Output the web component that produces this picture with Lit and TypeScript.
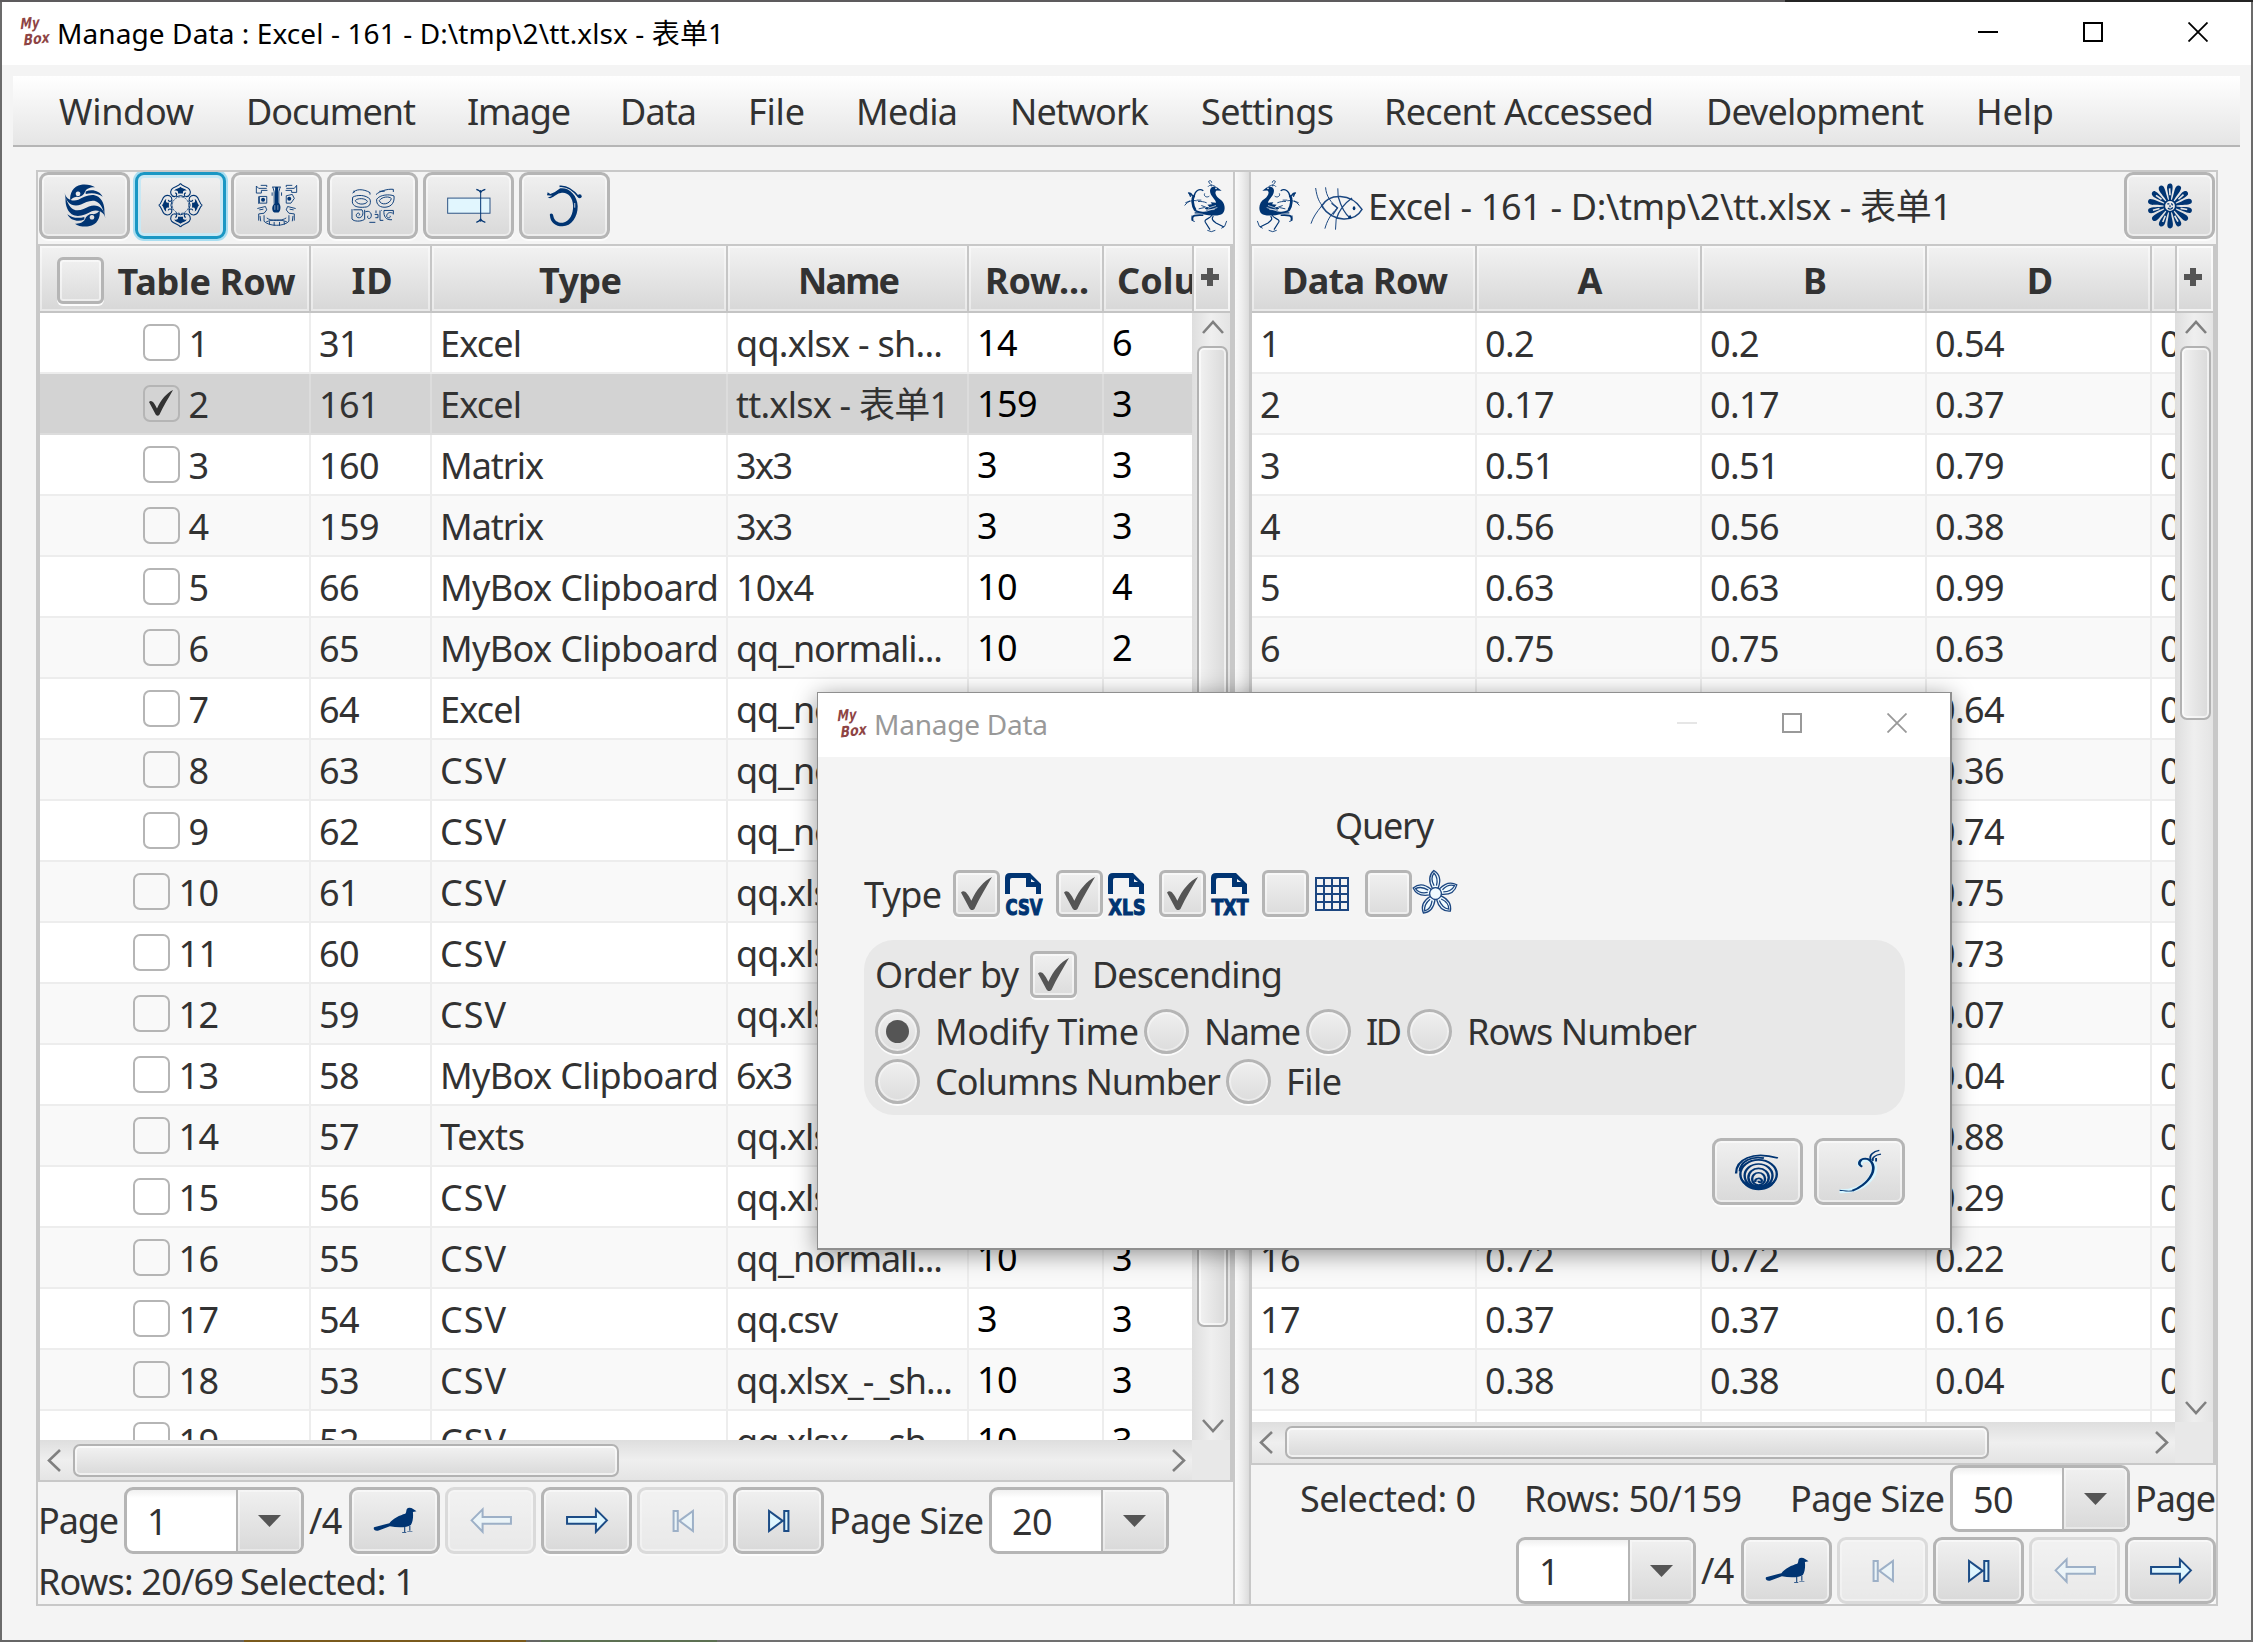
import { LitElement, html, svg, css, nothing } from "lit";
import { customElement, property } from "lit/decorators.js";
import { classMap } from "lit/directives/class-map.js";
import { styleMap } from "lit/directives/style-map.js";

const NAVY = "#003472";
const FONT = css`"Noto Sans", "Open Sans", "Noto Sans CJK SC", sans-serif`;

/* ---------- icons ---------- */

const turns = (n: number, f: (deg: number) => unknown) =>
  Array.from({ length: n }, (_, i) => f((360 / n) * i));

interface Glyph {
  box: string;
  w: number;
  h: number;
  body: unknown;
}

const swirlHalf = svg`
  <path fill=${NAVY} fill-rule="evenodd" d="M120 124 C117 102 128 80 153 76 C168 74 186 77 194 84 C180 83 168 88 164 97 C160 108 150 114 139 112 C130 113 124 117 120 124Z M143 96 a7 7 0 1 0 .1 0Z"/>
  <path fill=${NAVY} d="M166 96 C186 88 208 94 217 112 C204 102 186 98 166 104Z"/>
  <path fill=${NAVY} d="M103 100 C106 118 124 128 144 121 C162 112 184 100 204 112 C220 124 224 144 222 166 C218 144 208 128 192 124 C176 122 164 130 152 135 C128 144 106 132 103 100Z"/>`;

const petalQuarter = svg`
  <path fill=${NAVY} d="M452 80 C457 86 468 85 471 93 C464 90 457 93 460 101 H444 C447 93 440 90 433 93 C436 85 447 86 452 80Z"/>
  <path fill="none" stroke=${NAVY} stroke-width="3.4" d="M452 70 C455 79 472 79 479 88 C485 98 480 110 469 110 C462 109 462 100 468 99 M452 70 C449 79 432 79 425 88 C419 98 424 110 435 110 C442 109 442 100 436 99"/>
  <path fill="none" stroke=${NAVY} stroke-width="3" d="M438 111 Q452 103 466 111"/>`;

const GLYPHS: Record<string, Glyph> = {
  swirl: {
    box: "101 74 126 128", w: 42, h: 43,
    body: svg`<g>${swirlHalf}</g><g transform="rotate(180 164 138)">${swirlHalf}</g>`,
  },
  petals: {
    box: "384 69 136 136", w: 45, h: 45,
    body: svg`${turns(4, (d) => svg`<g transform="rotate(${d} 452 136)">${petalQuarter}</g>`)}
      <circle cx="452" cy="136" r="25" fill="none" stroke=${NAVY} stroke-width="2.4" stroke-dasharray="7 3"/>`,
  },
  mask: {
    box: "673 75 128 128", w: 43, h: 43,
    body: svg`<g fill="none" stroke=${NAVY} stroke-width="2.6">
      <path d="M677 81 L684 88 H708 M677 81 V102 H692 V94 H710 M690 79 H708 V84 M797 79 L790 88 H766 M797 79 V100 H782 V94 H764 M784 79 H766 V84"/>
      <path d="M724 84 H750 M726 84 L730 98 V134 M748 84 L744 98 V134 M724 100 V110 M752 100 V110"/>
      <path d="M686 112 H708 V132 H686 Z M766 110 L784 106 L790 118 L780 132 H766 Z M684 112 V134"/>
      <path d="M680 148 L704 142 L708 152 L700 162 L684 164 V184 M686 152 L698 150 M688 170 L690 186 M794 148 L770 142 L766 152 L774 162 L790 164 V184 M788 152 L776 150 M786 170 L784 186"/>
      <path d="M700 168 V186 C715 202 760 202 774 186 V168 M708 176 C720 186 752 186 766 176 M706 188 C722 180 752 180 768 188 M716 196 V186 M730 199 V188 M746 199 V188 M760 196 V186"/></g>
      <g fill=${NAVY}><path d="M733 84 H742 V130 C752 136 750 156 743 160 H731 C722 156 722 138 732 132Z"/><circle cx="697" cy="122" r="6"/><circle cx="775" cy="119" r="6"/></g>
      <path d="M732 138 V152 M741 138 V152" stroke="#eee" stroke-width="1.6"/>`,
  },
  face: {
    box: "91 84 132 106", w: 44, h: 35,
    body: svg`<g fill="none" stroke=${NAVY} stroke-width="2.8">
      <path d="M96 100 C104 86 128 86 148 98 V104 M100 92 V98 M166 104 C176 94 200 86 218 88 V96 M176 94 H192"/>
      <path d="M96 112 C108 104 136 104 148 118 C152 132 146 142 132 142 C112 144 96 140 95 126Z M104 122 C110 114 134 114 140 124 C140 134 110 138 104 122Z"/>
      <path d="M168 118 C178 104 206 102 220 108 C222 126 214 140 196 142 C180 144 166 136 168 118Z M176 122 C184 110 206 108 212 116 C208 134 180 138 176 122Z"/>
      <path d="M94 148 V178 C100 186 120 186 130 180 M98 150 H124 C130 160 126 176 112 174 C104 170 106 160 114 160 C118 162 118 166 114 168"/>
      <path d="M132 150 V180 M134 156 C148 150 156 164 150 174 C144 180 138 174 142 168 M146 188 H164"/>
      <path d="M166 152 V160 M162 164 H172 V174 H164 M178 152 V182 H188 M182 152 H184"/>
      <path d="M190 152 H218 V164 M190 152 C188 170 196 182 214 180 M216 160 C206 156 198 160 198 170 C202 178 212 174 208 168"/></g>`,
  },
  rename: {
    box: "380 84 132 104", w: 44, h: 35,
    body: svg`<rect x="382" y="114" width="127" height="45" fill="#e1f6fe" stroke="#2f5585" stroke-width="3"/>
      <g stroke=${NAVY} stroke-width="3" fill="none"><path d="M481 90 V184"/><path stroke-width="4" d="M468 88 Q480 92 481 98 Q482 92 495 88 M468 186 Q480 182 481 176 Q482 182 495 186"/></g>`,
  },
  dragon: {
    box: "684 74 106 126", w: 35, h: 42,
    body: svg`<path fill=${NAVY} d="M693 166 C690 158 702 156 703 166 C706 182 718 188 732 187 C752 184 764 160 763 136 C762 110 746 94 726 98 C716 98 708 108 694 114 L686 112 L700 106 L684 105 L686 96 L694 101 L708 95 L724 84 C750 80 776 104 777 138 C777 170 758 198 731 198 C710 198 694 186 693 166Z"/>
      <path d="M722 78 C744 76 764 90 780 110" fill="none" stroke=${NAVY} stroke-width="5"/>
      <circle cx="783" cy="108" r="6" fill=${NAVY}/><path d="M768 128 V142" stroke="#eee" stroke-width="2.5"/>`,
  },
  phoenix: {
    box: "8 44 132 158", w: 44, h: 53,
    body: svg`<path fill=${NAVY} d="M86 76 C86 64 100 60 108 66 L121 76 L106 75 C98 80 104 92 114 100 C132 110 134 134 124 144 C112 154 86 150 62 145 L76 134 L70 128 L84 124 L78 118 L92 116 L88 110 L104 112 C104 102 86 92 86 76Z"/>
      <circle cx="104" cy="69" r="2.4" fill="#f4f4f4"/>
      <g fill="none" stroke=${NAVY}>
      <path stroke-width="2.6" d="M90 63 C92 54 80 54 82 48 C86 44 92 47 91 52 M80 64 C84 58 96 58 102 64"/>
      <path stroke-width="8" d="M42 134 C32 118 32 100 38 90"/><path stroke-width="4" d="M38 94 C40 76 54 68 66 76 M34 92 C30 84 26 82 20 83 M24 84 L28 94"/>
      <path stroke-width="2.6" d="M84 92 C76 98 66 92 70 84 M10 120 C20 106 34 104 46 106 M46 104 H60 M12 112 L26 106 M50 108 C60 108 66 108 76 112 M60 120 L92 132 M52 130 L70 126"/>
      <path stroke-width="5" d="M40 134 C56 144 70 140 90 142 M34 164 C30 148 42 148 66 149"/><path stroke-width="3" d="M40 142 H64 M32 150 V164 L40 168"/>
      <path stroke-width="3.6" d="M92 148 C88 160 66 160 72 170 L86 192 M96 152 C90 160 92 164 104 172 L128 184"/><path stroke-width="2.6" d="M78 194 L90 198 L102 194 M120 188 L130 182 L136 166"/></g>
      <g stroke="#f4f4f4" stroke-width="2"><path d="M72 138 L108 126 M80 128 L104 120 M70 133 L100 132"/></g>`,
  },
  fish: {
    box: "389 60 160 132", w: 53, h: 44,
    body: svg`<g fill="none" stroke="#1b4781" stroke-width="3">
      <path stroke-width="4.5" d="M424 120 C446 82 512 78 546 130 C524 168 460 172 424 120Z"/>
      <path d="M406 66 C410 94 416 108 430 124 M424 120 C408 140 398 154 392 173 M436 64 C438 92 452 108 472 126 C450 146 440 166 434 188"/>
      <path stroke-width="4" d="M454 112 L472 126 L458 146 M474 92 C484 126 494 144 510 156 M516 96 C490 114 474 140 468 160"/>
      <path d="M473 67 L474 92 M468 160 L466 191"/></g><ellipse cx="522" cy="127" rx="4" ry="6" fill=${NAVY}/><path d="M502 158 L510 146 L516 156Z" fill=${NAVY}/>`,
  },
  sun: {
    box: "-34 -34 68 68", w: 46, h: 46,
    body: svg`${turns(14, (d) => svg`<g transform="rotate(${d})"><path fill=${NAVY} d="M-1.4 -9 C-2 -18 -5.6 -26 -4 -30 C-3 -34 2 -34 3.4 -31 C5 -26 2 -18 1.4 -9Z"/><path d="M0 -16 L-.6 -26" stroke="#e6e6e6" stroke-width=${Math.round(d / 25.7) % 2 ? 0 : 2.4}/></g>`)}
      <circle r="8.5" fill="#e9e9e9" stroke=${NAVY} stroke-width="2.5"/><path d="M-4 -3 H-1 M2 -4 L4 -1 M-3 3 C0 6 3 4 4 2 M0 -1 V2" stroke=${NAVY} stroke-width="1.8" fill="none"/>`,
  },
  bird: {
    box: "711 379 86 83", w: 44, h: 27,
    body: svg`<path fill=${NAVY} d="M713 441 L743 429 C750 415 764 404 774 400 C778 392 774 383 782 381 C788 381 791 387 796 392 L789 394 C790 408 789 425 785 434 C778 442 760 443 744 438 L722 451 C714 454 711 446 713 441Z"/>
      <path d="M773 440 V456 M783 437 V452 M768 458 H776 M778 455 H788" stroke=${NAVY} stroke-width="2" fill="none"/>`,
  },
  prev: {
    box: "898 384 80 75", w: 42, h: 25,
    body: svg`<path class="line" d="M901 421 L922 388 V411 H976 V431 H922 V455Z"/>`,
  },
  next: {
    box: "1082 384 80 75", w: 42, h: 25,
    body: svg`<path class="line" d="M1160 421 L1139 388 V411 H1084 V431 H1139 V455Z"/>`,
  },
  first: {
    box: "1284 388 42 67", w: 22, h: 22,
    body: svg`<path class="line" d="M1287 391 H1295 V452 H1287Z M1324 391 V452 L1298 421Z"/>`,
  },
  last: {
    box: "1468 388 42 67", w: 22, h: 22,
    body: svg`<path class="line" d="M1507 391 H1499 V452 H1507Z M1470 391 V452 L1496 421Z"/>`,
  },
  grid: {
    box: "0 0 34 34", w: 34, h: 34,
    body: svg`<path d="M1 1 H33 V33 H1Z M9 1 V33 M17 1 V33 M25 1 V33 M1 9 H33 M1 17 H33 M1 25 H33" fill="none" stroke="#1c4680" stroke-width="2"/>`,
  },
  blossom: {
    box: "-23 -23 46 46", w: 45, h: 45,
    body: svg`<g fill="#f0fbff" stroke="#1c4680" stroke-width="1.3">${turns(5, (d) => svg`<g transform="rotate(${d - 3})"><path d="M-3 -5.5 C-6.5 -13 -6 -19 -.5 -23.5 C6 -19 6 -12 3 -5.5Z"/><path d="M-1 -8 C-4 -14 -3 -18 -.5 -21 C3 -17 3 -13 1.4 -8"/></g>`)}<circle r="6"/></g>`,
  },
  shell: {
    box: "618 1282 84 104", w: 45, h: 38,
    body: svg`<g fill="none" stroke=${NAVY} stroke-width="4.5">
      <path d="M620 1338 C620 1300 650 1276 698 1296"/><path d="M627 1332 C628 1304 648 1290 672 1296"/>
      <ellipse cx="662" cy="1340" rx="34" ry="39"/><ellipse cx="662" cy="1344" rx="26" ry="32"/><ellipse cx="662" cy="1349" rx="19" ry="25"/><ellipse cx="662" cy="1353" rx="12" ry="17"/><path d="M656 1362 C654 1350 668 1348 668 1358 C668 1364 662 1364 662 1358"/></g>
      <path fill=${NAVY} d="M630 1352 C638 1366 650 1370 662 1370 C674 1370 688 1366 694 1352 C692 1374 678 1384 662 1384 C646 1384 634 1374 630 1352Z"/>`,
  },
  sprout: {
    box: "801 1268 82 124", w: 44, h: 46,
    body: svg`<g fill="none" stroke="#d8f6ff" stroke-width="11"><path d="M842 1314 C838 1294 862 1290 868 1312 C872 1340 850 1384 804 1382"/></g>
      <g fill="none" stroke=${NAVY} stroke-width="5"><path d="M846 1316 C836 1308 842 1294 852 1294 C866 1296 870 1318 864 1336 C856 1360 838 1376 828 1380"/><path stroke-width="2.5" d="M830 1380 C820 1384 812 1380 804 1379"/><path stroke-width="3.5" d="M862 1298 C858 1284 868 1274 878 1272 M866 1300 C864 1290 872 1284 881 1282 M872 1302 V1292"/></g>`,
  },
};

@customElement("ui-icon")
export class UiIcon extends LitElement {
  @property() name = "";
  @property({ type: Boolean }) flip = false;

  static styles = css`
    :host { display: inline-flex; flex: none; }
    svg { display: block; overflow: visible; }
    .flip { transform: scaleX(-1); }
    .line { fill: #dff6fe; stroke: #1c4c86; stroke-width: 2px; vector-effect: non-scaling-stroke; }
  `;

  render() {
    const g = GLYPHS[this.name];
    if (!g) return nothing;
    return html`<svg class=${classMap({ flip: this.flip })} width=${g.w} height=${g.h} viewBox=${g.box} preserveAspectRatio="none">${g.body}</svg>`;
  }
}

@customElement("file-icon")
export class FileIcon extends LitElement {
  @property() ext = "";

  static styles = css`
    :host { display: inline-flex; flex: none; }
    text { font: 900 22px "DejaVu Sans Condensed", "DejaVu Sans", sans-serif; }
  `;

  render() {
    return html`<svg width="40" height="44" viewBox="0 0 40 44">
      <path fill=${NAVY} fill-rule="evenodd" d="M1 22 V6 Q1 1 6 1 H26 L37 12 V22 H32 V15 H22 V6 H8 Q6 6 6 8 V22Z M27 7 V10 H31Z"/>
      <text x="1.5" y="42.5" textLength="37" lengthAdjust="spacingAndGlyphs" fill=${NAVY} stroke=${NAVY} stroke-width="1.1">${this.ext}</text>
    </svg>`;
  }
}

@customElement("box-logo")
export class BoxLogo extends LitElement {
  static styles = css`
    :host { display: inline-flex; flex: none; }
    text { font: italic 700 15px "DejaVu Sans Condensed", "DejaVu Sans", sans-serif; fill: #8e4444; }
  `;
  render() {
    return html`<svg width="32" height="32" viewBox="0 0 32 32">
      <text x="2" y="13" textLength="19" lengthAdjust="spacingAndGlyphs" transform="rotate(-6 4 14) skewX(-6)">My</text>
      <text x="7" y="29.5" textLength="26" lengthAdjust="spacingAndGlyphs" transform="rotate(-7 4 30) skewX(-6)">Box</text>
    </svg>`;
  }
}

/* ---------- text set to a given measure ---------- */

@customElement("ui-text")
export class UiText extends LitElement {
  @property({ type: Number }) w = 0;
  @property() label = "";

  static styles = css`
    :host { display: inline-block; flex: none; white-space: pre; }
    .ink { display: inline-block; }
  `;

  updated() {
    const ink = this.renderRoot.querySelector<HTMLElement>(".ink")!;
    ink.style.letterSpacing = "0px";
    ink.style.marginRight = "0px";
    if (!this.w) return;
    const natural = ink.getBoundingClientRect().width;
    const gap = (this.w - natural) / (this.label.length - 1);
    ink.style.letterSpacing = `${gap}px`;
    ink.style.marginRight = `${-gap}px`;
  }

  render() {
    return html`<span class="ink">${this.label}</span>`;
  }
}

const text = (label: string, w: number) => html`<ui-text .label=${label} .w=${w}></ui-text>`;

/* ---------- data ---------- */

const MENUS: [string, number, number][] = [
  ["Window", 187, 135], ["Document", 221, 170], ["Image", 153, 104], ["Data", 128, 77],
  ["File", 108, 57], ["Media", 154, 102], ["Network", 191, 139], ["Settings", 183, 133],
  ["Recent Accessed", 322, 270], ["Development", 270, 218], ["Help", 120, 78],
];

const LEFT_ROWS: string[][] = [
  ["1", "31", "Excel", "qq.xlsx - sh...", "14", "6"],
  ["2", "161", "Excel", "tt.xlsx - 表单1", "159", "3"],
  ["3", "160", "Matrix", "3x3", "3", "3"],
  ["4", "159", "Matrix", "3x3", "3", "3"],
  ["5", "66", "MyBox Clipboard", "10x4", "10", "4"],
  ["6", "65", "MyBox Clipboard", "qq_normali...", "10", "2"],
  ["7", "64", "Excel", "qq_normali...", "10", "2"],
  ["8", "63", "CSV", "qq_normali...", "10", "3"],
  ["9", "62", "CSV", "qq_normali...", "10", "3"],
  ["10", "61", "CSV", "qq.xlsx_-_sh...", "10", "3"],
  ["11", "60", "CSV", "qq.xlsx_-_sh...", "10", "3"],
  ["12", "59", "CSV", "qq.xlsx_-_sh...", "10", "3"],
  ["13", "58", "MyBox Clipboard", "6x3", "6", "3"],
  ["14", "57", "Texts", "qq.xlsx_-_sh...", "10", "3"],
  ["15", "56", "CSV", "qq.xlsx_-_sh...", "10", "3"],
  ["16", "55", "CSV", "qq_normali...", "10", "3"],
  ["17", "54", "CSV", "qq.csv", "3", "3"],
  ["18", "53", "CSV", "qq.xlsx_-_sh...", "10", "3"],
  ["19", "52", "CSV", "qq.xlsx_-_sh...", "10", "3"],
];

const NAME_W: Record<string, number> = {
  "qq.xlsx - sh...": 207, "tt.xlsx - 表单1": 214, "qq_normali...": 207, "qq.xlsx_-_sh...": 217,
  "qq.csv": 102, "3x3": 57, "10x4": 78, "6x3": 57,
};
const TYPE_W: Record<string, number> = {
  Excel: 82, Matrix: 104, "MyBox Clipboard": 279, CSV: 66, Texts: 85,
};

const RIGHT_ROWS: [string, string][] = [
  ["0.2", "0.54"], ["0.17", "0.37"], ["0.51", "0.79"], ["0.56", "0.38"], ["0.63", "0.99"],
  ["0.75", "0.63"], ["0.6", "0.64"], ["0.41", "0.36"], ["0.22", "0.74"], ["0.9", "0.75"],
  ["0.35", "0.73"], ["0.8", "0.07"], ["0.14", "0.04"], ["0.57", "0.88"], ["0.48", "0.29"],
  ["0.72", "0.22"], ["0.37", "0.16"], ["0.38", "0.04"], ["", ""],
];

/* ---------- page ---------- */

@customElement("app-root")
export class AppRoot extends LitElement {
  static styles = css`
    :host { display: block; width: 2253px; height: 1642px; overflow: hidden; }
    * { box-sizing: border-box; }
    .desktop {
      position: relative; width: 2253px; height: 1642px; padding: 2px; color: #323232;
      font: 36px/50px ${FONT};
      background: linear-gradient(90deg, #5d5b5d 0 1785px, #242424 1785px) 0 0 / 100% 2px no-repeat,
        linear-gradient(90deg, #666 0 244px, #7a5a1c 244px 526px, #666 526px 541px, #5c7052 541px 717px, #707070 717px) 0 100% / 100% 2px no-repeat, #6b6b6b;
    }
    .window { height: 1638px; background: #f4f4f4; display: flex; flex-direction: column; overflow: hidden; }
    .titlebar { height: 63px; background: #fff; color: #000; font-size: 28px; display: flex; align-items: center; padding: 0 43px 3px 18px; flex: none; }
    .titlebar .caption { margin-left: 5px; flex: 1; display: flex; line-height: 40px; padding-top: 1px; }
    .controls { display: flex; gap: 85px; align-items: center; margin-bottom: 1px; }
    .controls svg { display: block; }
    .menubar {
      margin: 11px 11px 0; height: 71px; flex: none; display: flex; align-items: center; padding: 3px 0 0 46px;
      background: linear-gradient(#fff, #e5e5e5); border-bottom: 2px solid #b5b5b5;
    }
    .menu { flex: none; }
    .split { margin: 23px 33px 0 34px; height: 1436px; border: 2px solid #c8c8c8; display: grid; grid-template-columns: 1195px 18px 1fr; }
    .pane { display: flex; flex-direction: column; overflow: hidden; min-width: 0; }
    .divider { border: solid #c8c8c8; border-width: 0 2px; background: linear-gradient(90deg, #fafafa, #eee 50%, #dcdcdc); }
    .toolbar { height: 72px; flex: none; display: flex; gap: 5px; align-items: flex-start; padding-left: 1px; }
    .toolbar .push { margin-left: auto; }
    .toolbar.right { padding: 0 1px 0 5px; gap: 0; }
    .toolbar .bird { margin-top: 8px; }
    .toolbar .fish { margin: 14px 5px 0 10px; }
    .toolbar .heading { margin-top: 10px; }
    .btn {
      width: 91px; height: 67px; flex: none; display: flex; align-items: center; justify-content: center;
      border: 3px solid #b5b5b5; border-radius: 9px;
      background: linear-gradient(#f0f0f0, #d9d9d9);
      box-shadow: inset 0 0 0 2px rgba(255, 255, 255, .5), 0 2px 0 #fcfcfc;
    }
    .btn.focus { border-color: #1a97c4; box-shadow: inset 0 0 0 3px #c8e8f4, 0 0 0 2px #a9def1; }
    .btn.off { opacity: .4; }

    .grid { display: grid; flex: none; background: #fff; border: solid #c8c8c8; border-width: 2px 0 2px 0; }
    .grid.left { height: 1238px; border-left-width: 2px; border-right-width: 3px; grid-template: 67px 1127px 40px / 1fr 38px; }
    .grid.right { height: 1221px; border-left-width: 1px; border-right-width: 3px; grid-template: 67px 1109px 41px / 1fr 38px; }
    .head { display: flex; overflow: hidden; background: linear-gradient(#f2f2f2, #d7d7d7); border-bottom: 2px solid #c4c4c4; font-weight: 700; }
    .head .cell { border-right: 2px solid #c6c6c6; box-shadow: inset 0 0 0 2px rgba(255, 255, 255, .45); display: flex; align-items: center; justify-content: center; flex: none; overflow: hidden; padding: 4px 0 0 3px; }
    .head .cell.start { justify-content: flex-start; padding-left: 13px; }
    .plus { border-left: 2px solid #c6c6c6; border-bottom: 2px solid #c4c4c4; background: linear-gradient(#f2f2f2, #d7d7d7); box-shadow: inset 0 0 0 2px rgba(255, 255, 255, .7); display: flex; align-items: center; justify-content: center; padding: 0 5px 4px 0; }
    .body { overflow: hidden; min-height: 0; }
    .row { display: flex; height: 61px; background: #fff; border-bottom: 2px solid #ededed; }
    .row.alt { background: #f9f9f9; }
    .row.sel { background: #d3d3d3; border-color: #dcdcdc; }
    .row .cell { flex: none; border-right: 2px solid #ededed; display: flex; align-items: center; padding: 2px 0 0 8px; overflow: hidden; letter-spacing: -.6px; white-space: pre; }
    .row.sel .cell { border-color: #dcdcdc; }
    .row .cell.idx { justify-content: center; padding-left: 2px; gap: 9px; }
    .row .cell.num { color: #000; padding-top: 0; }
    .c0 { width: 271px; } .c1 { width: 121px; } .c2 { width: 296px; } .c3 { width: 241px; } .c4 { width: 135px; } .c5 { width: 190px; }
    .r0 { width: 225px; }
    .tick { width: 37px; height: 37px; border: 2px solid #b5b5b5; border-radius: 7px; margin-bottom: 3px; display: flex; align-items: center; justify-content: center; flex: none; }
    .vbar { background: linear-gradient(90deg, #dedede, #efefef 50%, #e4e4e4); display: flex; flex-direction: column; align-items: center; padding: 7px 0 7px 3px; }
    .hbar { background: linear-gradient(#dedede, #efefef 50%, #e4e4e4); display: flex; align-items: center; padding: 0 6px 0 7px; }
    .vthumb, .hthumb { border: 2px solid #b2b2b2; border-radius: 7px; flex: none; box-shadow: inset 0 0 0 2px rgba(255, 255, 255, .6); }
    .vthumb { width: 31px; margin-top: 11px; background: linear-gradient(90deg, #f2f2f2, #d9d9d9); }
    .hthumb { height: 33px; margin-left: 11px; background: linear-gradient(#f2f2f2, #d9d9d9); }
    .down { margin-top: auto; } .end { margin-left: auto; }
    .corner { background: #e8e8e8; }

    .pager { display: flex; gap: 5px; align-items: center; height: 67px; flex: none; margin-top: 5px; }
    .pager.far { justify-content: flex-end; padding-right: 0; }
    .pager.tight { margin-top: 0; }
    .slash { width: 35px; letter-spacing: -.6px; }
    .wide { margin-right: 43px; }
    .status { margin-top: 3px; display: flex; gap: 6px; }
    .combo { width: 180px; height: 67px; flex: none; display: flex; border: 3px solid #b5b5b5; border-radius: 9px; background: linear-gradient(#f0f0f0, #fff 8px); overflow: hidden; }
    .combo .value { width: 109px; padding: 7px 0 0 20px; letter-spacing: -.6px; }
    .combo .drop { flex: 1; border-left: 2px solid #b5b5b5; background: linear-gradient(#f0f0f0, #d9d9d9); display: flex; align-items: center; justify-content: center; box-shadow: inset 0 0 0 2px rgba(255, 255, 255, .4); }

    .dialog { position: absolute; left: 817px; top: 692px; width: 1135px; height: 558px; background: #f4f4f4; border: 2px solid #8f8f8f; border-width: 1px 2px 2px 1px; box-shadow: 0 4px 22px rgba(0, 0, 0, .42); display: flex; flex-direction: column; overflow: visible; }
    .dialog .titlebar { color: #999; height: 64px; padding: 0 43px 3px 19px; }
    .dialog .content { padding: 44px 45px 0 46px; display: flex; flex-direction: column; }
    .query { display: flex; justify-content: center; }
    .types { display: flex; align-items: center; height: 47px; margin-top: 19px; }
    .types .lead { width: 89px; padding-top: 2px; }
    .opt { display: flex; align-items: center; width: 103px; flex: none; }
    .opt.n4 { gap: 4px; } .opt.n5 { gap: 6px; } .opt.n0 { gap: 1px; }
    .check { width: 47px; height: 47px; flex: none; border: 3px solid #b5b5b5; border-radius: 6px; background: linear-gradient(#f0f0f0, #dcdcdc); box-shadow: inset 0 0 0 2px rgba(255, 255, 255, .5), 0 2px 0 #fcfcfc; display: flex; align-items: center; justify-content: center; }
    .order { margin-top: 23px; height: 175px; border-radius: 30px; background: #e8e8e8; padding: 11px 0 0 11px; display: flex; flex-direction: column; }
    .line { display: flex; align-items: center; height: 47px; }
    .line .check { margin: 0 15px 0 11px; }
    .line + .line { margin-top: 11px; height: 45px; }
    .line + .line + .line { margin-top: 5px; }
    .radio { width: 45px; height: 45px; flex: none; border: 3px solid #b5b5b5; border-radius: 50%; background: linear-gradient(#f0f0f0, #dcdcdc); box-shadow: inset 0 0 0 2px rgba(255, 255, 255, .4), 0 2px 0 #fcfcfc; display: flex; align-items: center; justify-content: center; margin-right: 15px; }
    .radio.on::after { content: ""; width: 23px; height: 23px; border-radius: 50%; background: #555; }
    .pick { display: flex; align-items: center; flex: none; margin-right: 5px; }
    .actions { display: flex; justify-content: flex-end; gap: 11px; margin-top: 23px; }
    .check24 { margin: 2px 0 0 14px; }
  `;

  private arrow(dir: "up" | "down" | "left" | "right") {
    const d = { up: "M2 13 L12 2 L22 13", down: "M2 2 L12 13 L22 2", left: "M13 2 L2 12.5 L13 23", right: "M2 2 L13 12.5 L2 23" }[dir];
    const vertical = dir === "up" || dir === "down";
    return html`<svg class=${classMap({ down: dir === "down", end: dir === "right" })} width=${vertical ? 24 : 15} height=${vertical ? 15 : 25}><path d=${d} fill="none" stroke="#808080" stroke-width="2.6"/></svg>`;
  }

  private controls(color: string, minColor: string) {
    return html`<div class="controls">
      <svg width="20" height="20"><path d="M0 10 H20" stroke=${minColor} stroke-width="2"/></svg>
      <svg width="20" height="20"><path d="M1 1 H19 V19 H1Z" fill="none" stroke=${color} stroke-width="2"/></svg>
      <svg width="20" height="20"><path d="M.5 .5 L19.5 19.5 M19.5 .5 L.5 19.5" stroke=${color} stroke-width="1.8"/></svg>
    </div>`;
  }

  private mark(size: number, color: string) {
    return html`<svg width=${size} height=${(size * 32) / 30} viewBox="0 0 30 32"><path fill=${color} d="M0 15 C3 12 6 15 10 23 C15 12 22 4 30 0 C25 9 18 20 13 31 C11 33 9 32 8 30Z"/></svg>`;
  }

  private button(icon: string, state = "") {
    return html`<div class="btn ${state}"><ui-icon name=${icon}></ui-icon></div>`;
  }

  private combo(value: string) {
    return html`<div class="combo"><div class="value">${value}</div><div class="drop"><svg width="23" height="12"><path d="M0 0 H23 L11.5 12Z" fill="#555"/></svg></div></div>`;
  }

  private plus() {
    return html`<div class="plus"><svg width="18" height="18"><path d="M9 0 V18 M0 9 H18" stroke="#555" stroke-width="6"/></svg></div>`;
  }

  private leftRow(r: string[], i: number) {
    const sel = i === 1;
    return html`<div class=${classMap({ row: true, alt: i % 2 === 1, sel })}>
      <div class="cell idx c0"><span class="tick">${sel ? this.mark(24, "#323232") : nothing}</span>${r[0]}</div>
      <div class="cell c1">${r[1]}</div>
      <div class="cell c2">${text(r[2], TYPE_W[r[2]])}</div>
      <div class="cell c3">${text(r[3], NAME_W[r[3]])}</div>
      <div class="cell num c4">${r[4]}</div>
      <div class="cell num c5">${r[5]}</div>
    </div>`;
  }

  private rightRow(r: [string, string], i: number) {
    return html`<div class=${classMap({ row: true, alt: i % 2 === 1 })}>
      <div class="cell r0">${r[0] ? i + 1 : ""}</div>
      <div class="cell r0">${r[0]}</div>
      <div class="cell r0">${r[0]}</div>
      <div class="cell r0">${r[1]}</div>
      <div class="cell r0">${r[0] ? "0" : ""}</div>
    </div>`;
  }

  private radio(label: string, w: number, on = false) {
    return html`<div class="pick"><span class=${classMap({ radio: true, on })}></span>${text(label, w)}</div>`;
  }

  private leftPane() {
    return html`<section class="pane">
      <div class="toolbar">
        ${this.button("swirl")}${this.button("petals", "focus")}${this.button("mask")}${this.button("face")}${this.button("rename")}${this.button("dragon")}
        <ui-icon class="push bird" name="phoenix"></ui-icon><span></span>
      </div>
      <div class="grid left">
        <div class="head">
          <div class="cell c0"><span class="check"></span><span class="check24">${text("Table Row", 178)}</span></div>
          <div class="cell c1">${text("ID", 41)}</div>
          <div class="cell c2">${text("Type", 83)}</div>
          <div class="cell c3">${text("Name", 102)}</div>
          <div class="cell c4">${text("Row...", 104)}</div>
          <div class="cell start c5">${text("Columns", 157)}</div>
        </div>
        ${this.plus()}
        <div class="body">${LEFT_ROWS.map((r, i) => this.leftRow(r, i))}</div>
        <div class="vbar">${this.arrow("up")}<div class="vthumb" style=${styleMap({ height: "981px" })}></div>${this.arrow("down")}</div>
        <div class="hbar">${this.arrow("left")}<div class="hthumb" style=${styleMap({ width: "546px" })}></div>${this.arrow("right")}</div>
        <div class="corner"></div>
      </div>
      <div class="pager">
        ${text("Page", 81)}${this.combo("1")}<span class="slash">/4</span>
        ${this.button("bird")}${this.button("prev", "off")}${this.button("next")}${this.button("first", "off")}${this.button("last")}
        ${text("Page Size", 155)}${this.combo("20")}
      </div>
      <div class="status">${text("Rows: 20/69", 196)}${text("Selected: 1", 175)}</div>
    </section>`;
  }

  private rightPane() {
    return html`<section class="pane">
      <div class="toolbar right">
        <ui-icon class="bird" name="phoenix" flip></ui-icon>
        <ui-icon class="fish" name="fish"></ui-icon>
        <span class="heading">${text("Excel - 161 - D:\\tmp\\2\\tt.xlsx - 表单1", 584)}</span>
        <span class="push">${this.button("sun")}</span>
      </div>
      <div class="grid right">
        <div class="head">
          <div class="cell r0">${text("Data Row", 166)}</div>
          <div class="cell r0">A</div><div class="cell r0">B</div><div class="cell r0">D</div><div class="cell r0"></div>
        </div>
        ${this.plus()}
        <div class="body">${RIGHT_ROWS.map((r, i) => this.rightRow(r, i))}</div>
        <div class="vbar">${this.arrow("up")}<div class="vthumb" style=${styleMap({ height: "374px" })}></div>${this.arrow("down")}</div>
        <div class="hbar">${this.arrow("left")}<div class="hthumb" style=${styleMap({ width: "704px" })}></div>${this.arrow("right")}</div>
        <div class="corner"></div>
      </div>
      <div class="pager far tight">
        <span class="wide">${text("Selected: 0", 176)}</span><span class="wide">${text("Rows: 50/159", 218)}</span>
        ${text("Page Size", 155)}${this.combo("50")}${text("Page", 81)}
      </div>
      <div class="pager far">
        ${this.combo("1")}<span class="slash">/4</span>
        ${this.button("bird")}${this.button("first", "off")}${this.button("last")}${this.button("prev", "off")}${this.button("next")}
      </div>
    </section>`;
  }

  private dialog() {
    return html`<div class="dialog">
      <div class="titlebar"><box-logo></box-logo><span class="caption">${text("Manage Data", 174)}</span>${this.controls("#999", "#e6e6e6")}</div>
      <div class="content">
        <div class="query">${text("Query", 99)}</div>
        <div class="types">
          <span class="lead">${text("Type", 78)}</span>
          ${["CSV", "XLS", "TXT"].map((e) => html`<span class="opt n4"><span class="check">${this.mark(31, "#555")}</span><file-icon .ext=${e}></file-icon></span>`)}
          <span class="opt n5"><span class="check"></span><ui-icon name="grid"></ui-icon></span>
          <span class="opt n0"><span class="check"></span><ui-icon name="blossom"></ui-icon></span>
        </div>
        <div class="order">
          <div class="line">${text("Order by", 144)}<span class="check">${this.mark(31, "#555")}</span>${text("Descending", 191)}</div>
          <div class="line">${this.radio("Modify Time", 204, true)}${this.radio("Name", 97)}${this.radio("ID", 36)}${this.radio("Rows Number", 230)}</div>
          <div class="line">${this.radio("Columns Number", 286)}${this.radio("File", 56)}</div>
        </div>
        <div class="actions">${this.button("shell")}${this.button("sprout")}</div>
      </div>
    </div>`;
  }

  render() {
    return html`<div class="desktop">
      <div class="window">
        <div class="titlebar"><box-logo></box-logo><span class="caption">${text("Manage Data : Excel - 161 - D:\\tmp\\2\\tt.xlsx - 表单1", 667)}</span>${this.controls("#000", "#000")}</div>
        <div class="menubar">${MENUS.map(([label, width, ink]) => html`<span class="menu" style=${styleMap({ width: `${width}px` })}>${text(label, ink)}</span>`)}</div>
        <div class="split">${this.leftPane()}<div class="divider"></div>${this.rightPane()}</div>
      </div>
      ${this.dialog()}
    </div>`;
  }
}
